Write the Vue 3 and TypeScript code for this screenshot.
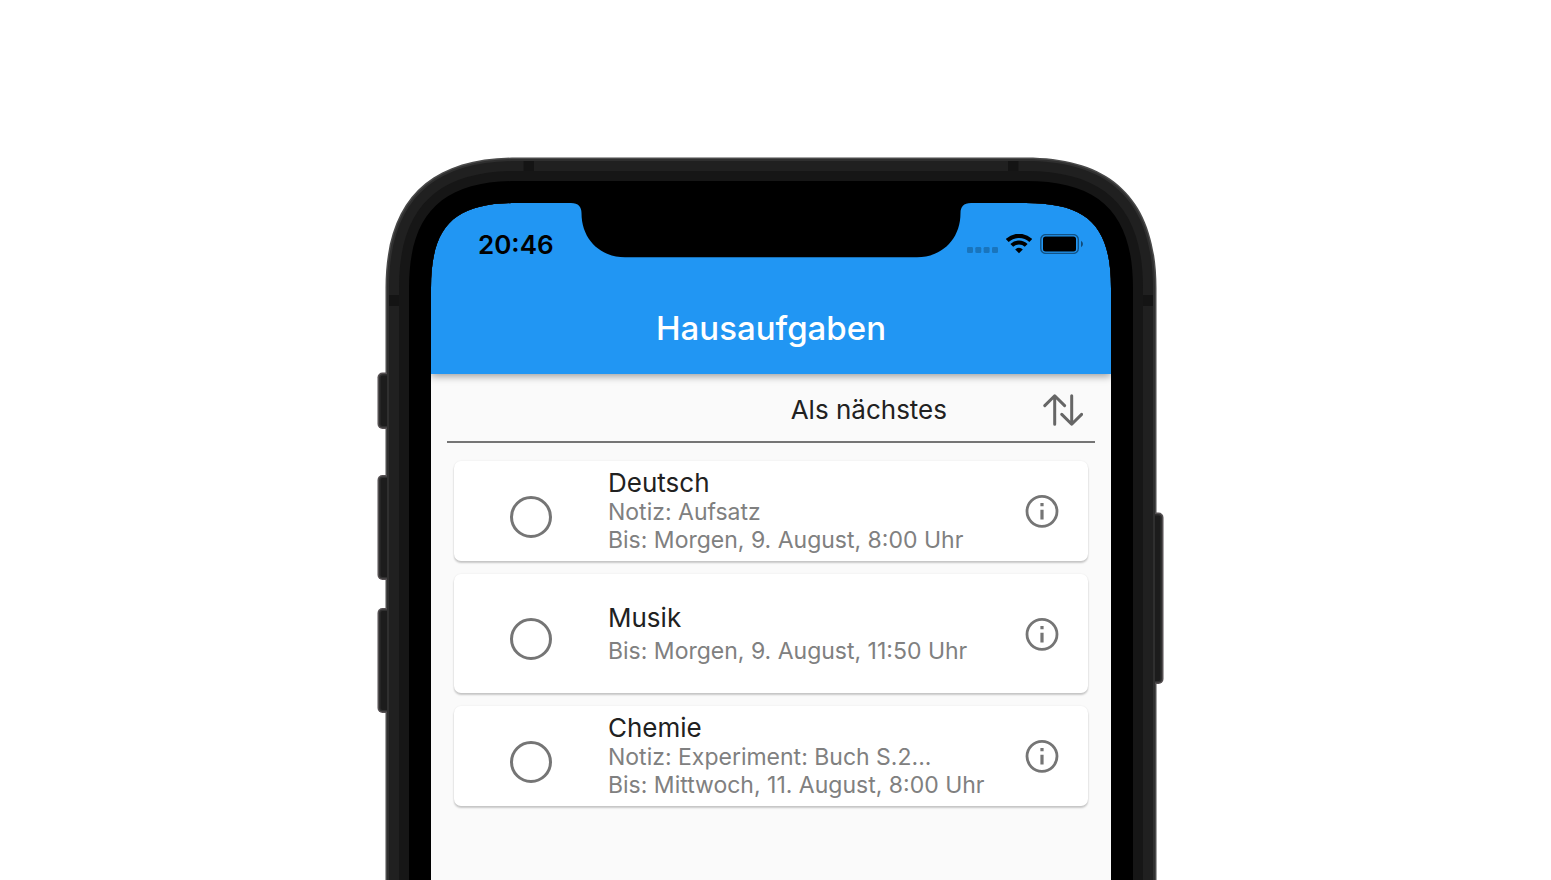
<script setup lang="ts">
import { ref } from 'vue'

interface Homework {
  id: number
  subject: string
  note?: string
  due: string
  done: boolean
}

const homework = ref<Homework[]>([
  { id: 1, subject: 'Deutsch', note: 'Aufsatz', due: 'Morgen, 9. August, 8:00 Uhr', done: false },
  { id: 2, subject: 'Musik', due: 'Morgen, 9. August, 11:50 Uhr', done: false },
  { id: 3, subject: 'Chemie', note: 'Experiment: Buch S.2...', due: 'Mittwoch, 11. August, 8:00 Uhr', done: false },
])

// Smooth-cornered outline, grown outwards from the display edge and open at the bottom.
function outline(grow: number): string {
  const left = 431 - grow
  const top = 203 - grow
  const right = 1111 + grow
  const bottom = 900
  const reach = 85 + grow
  const near = reach - (62 + grow * 0.552)
  return [
    `M${left} ${bottom}V${top + reach}`,
    `C${left} ${top + near} ${left + near} ${top} ${left + reach} ${top}`,
    `H${right - reach}`,
    `C${right - near} ${top} ${right} ${top + near} ${right} ${top + reach}`,
    `V${bottom}Z`,
  ].join('')
}

const display = outline(0)
const layers = [
  { fill: '#4a4a4a', d: outline(45.5) + display },
  { fill: '#2f2f2f', d: outline(44) + display },
  { fill: '#202020', d: outline(42) + display },
  { fill: '#161616', d: outline(32) + display },
  { fill: '#000', d: outline(22) + display },
]
const bands = [
  { x: 523.5, y: 161, w: 10.5, h: 10 },
  { x: 1008, y: 161, w: 10.5, h: 10 },
  { x: 389, y: 295, w: 10, h: 11 },
  { x: 1143, y: 295, w: 10, h: 11 },
]
const keys = [
  { x: 377.5, y: 372.5, h: 56.5 },
  { x: 377.5, y: 475, h: 105 },
  { x: 377.5, y: 608, h: 105 },
  { x: 1149, y: 512.5, h: 171.5 },
]
</script>

<template>
  <div class="page">
    <div class="device">
      <main class="screen">
        <header class="app-bar">
          <div class="status">
            <time class="clock">20:46</time>
            <div class="indicators">
              <svg width="31" height="20" viewBox="0 0 31 20" aria-hidden="true">
                <g fill="#000" fill-opacity=".22">
                  <rect x="0" y="13" width="6" height="6" rx="1.3" />
                  <rect x="8.3" y="13" width="6" height="6" rx="1.3" />
                  <rect x="16.6" y="13" width="6" height="6" rx="1.3" />
                  <rect x="25" y="13" width="6" height="6" rx="1.3" />
                </g>
              </svg>
              <svg width="26" height="20" viewBox="0 0 26 20" aria-hidden="true">
                <g fill="none" stroke="#000">
                  <path d="M1.2 6.6A17 17 0 0 1 24.8 6.6" stroke-width="4.2" />
                  <path d="M5.8 11.4A10.3 10.3 0 0 1 20.2 11.4" stroke-width="4" />
                </g>
                <path d="M13 19.2L9.2 15.4A5.4 5.4 0 0 1 16.8 15.4Z" fill="#000" />
              </svg>
              <svg width="43" height="20" viewBox="0 0 43 20" aria-hidden="true">
                <rect x=".8" y=".6" width="37.5" height="18.8" rx="5" fill="none" stroke="#000" stroke-opacity=".45" stroke-width="1.4" />
                <rect x="3" y="2.5" width="33" height="15" rx="2.5" fill="#000" />
                <path d="M41 6.8Q43 8 43 10T41 13.2Z" fill="#000" fill-opacity=".5" />
              </svg>
            </div>
          </div>
          <h1 class="title">Hausaufgaben</h1>
        </header>

        <div class="sort">
          <span id="sort-label">Als nächstes</span>
          <button class="icon-button" type="button" aria-labelledby="sort-label">
            <svg width="40" height="34" viewBox="0 0 40 34" aria-hidden="true">
              <path
                d="M11.7 31.2V3M1.8 12.6L11.7 2.8L21.6 12.6M28.7 2.8V31M18.8 21.4L28.7 31.2L38.6 21.4"
                fill="none" stroke="#666" stroke-width="3" stroke-linecap="round" stroke-linejoin="round"
              />
            </svg>
          </button>
        </div>

        <ul class="list">
          <li v-for="item in homework" :key="item.id" class="card" :class="{ roomy: !item.note }">
            <input :id="`done-${item.id}`" v-model="item.done" class="check" type="checkbox" />
            <div class="text">
              <label class="subject" :for="`done-${item.id}`">{{ item.subject }}</label>
              <p v-if="item.note">Notiz: {{ item.note }}</p>
              <p>Bis: {{ item.due }}</p>
            </div>
            <button class="icon-button" type="button" :aria-label="`Info ${item.subject}`">
              <svg width="34" height="34" viewBox="0 0 34 34" aria-hidden="true">
                <circle cx="17" cy="17.3" r="15" fill="none" stroke="#757575" stroke-width="2.8" />
                <path d="M15.4 9h3.2v3.2h-3.2zM15.4 15.7h3.2v9.8h-3.2z" fill="#757575" />
              </svg>
            </button>
          </li>
        </ul>
      </main>

      <svg class="frame" viewBox="377 157 788 723" preserveAspectRatio="xMidYMin slice" aria-hidden="true">
        <defs>
          <clipPath id="outside">
            <path d="M370 150H387V900H370ZM1155 150H1170V900H1155Z" />
          </clipPath>
        </defs>
        <path v-for="layer in layers" :key="layer.fill" :d="layer.d" :fill="layer.fill" fill-rule="evenodd" />
        <g clip-path="url(#outside)">
          <template v-for="key in keys" :key="key.y">
            <rect :x="key.x" :y="key.y" width="14.5" :height="key.h" rx="5" fill="#555052" />
            <rect :x="key.x + 1.5" :y="key.y + 1.5" width="11.5" :height="key.h - 3" rx="4" fill="#2f2f2f" />
            <rect :x="key.x + 3" :y="key.y + 3" width="8.5" :height="key.h - 6" rx="2" fill="#1c1c1c" />
          </template>
        </g>
        <rect v-for="band in bands" :key="`${band.x}`" :x="band.x" :y="band.y" :width="band.w" :height="band.h" fill="#141414" />
        <path d="M571 202V203C578.5 203 581.5 207 581.5 213C581.5 240 601 257.3 625 257.3H917C941 257.3 960.5 240 960.5 213C960.5 207 963.5 203 971 203V202Z" fill="#000" />
      </svg>
    </div>
  </div>
</template>

<style>
body {
  margin: 0;
  background: #fff;
}
</style>

<style scoped>
.page {
  box-sizing: border-box;
  display: flex;
  justify-content: center;
  min-height: 100vh;
  padding: 157px 9px 0 0;
  overflow: hidden;
  font-family: Inter, "Liberation Sans", sans-serif;
  color: #212121;
}

.device {
  position: relative;
  box-sizing: border-box;
  display: flex;
  width: 100%;
  max-width: 788px;
  padding: 46px 54px 0;
}

.frame {
  position: absolute;
  inset: 0;
  width: 100%;
  height: 100%;
  pointer-events: none;
}

.screen {
  flex: 1;
  min-width: 0;
  background: #fafafa;
}

.app-bar {
  background: #2196f3;
  box-shadow: 0 2px 8px rgba(0, 0, 0, 0.4);
}

.status {
  display: flex;
  align-items: center;
  justify-content: space-between;
  height: 82px;
  padding: 0 28px 0 47px;
}

.clock {
  font-size: 26px;
  font-weight: 600;
  color: #000;
}

.indicators {
  display: flex;
  gap: 8px;
}

svg {
  display: block;
}

.title {
  margin: 0;
  padding-bottom: 3px;
  font-size: 33px;
  font-weight: 500;
  line-height: 86px;
  text-align: center;
  color: #fff;
}

.sort {
  display: flex;
  align-items: center;
  justify-content: flex-end;
  gap: 96px;
  box-sizing: border-box;
  height: 69px;
  margin: 0 16px;
  padding: 4px 12px 0 0;
  border-bottom: 2px solid #757575;
  font-size: 26px;
}

.icon-button {
  padding: 0;
  border: 0;
  background: none;
  cursor: pointer;
}

.list {
  display: flex;
  flex-direction: column;
  gap: 13px;
  margin: 0;
  padding: 18px 23px;
  list-style: none;
}

.card {
  display: grid;
  grid-template-columns: 153px 1fr 92px;
  align-items: center;
  justify-items: center;
  min-height: 100px;
  border-radius: 7px;
  background: #fff;
  box-shadow: 0 2px 2px rgba(0, 0, 0, 0.2), 0 0 2px rgba(0, 0, 0, 0.08);
}

.card.roomy {
  min-height: 119px;
}

.check {
  appearance: none;
  box-sizing: border-box;
  width: 42px;
  height: 42px;
  margin: 11px 0 0;
  border: 3px solid #757575;
  border-radius: 50%;
}

.check:checked {
  background: #2196f3;
}

.text {
  justify-self: stretch;
  padding-left: 1px;
  font-size: 23px;
  line-height: 28px;
  color: #808080;
  white-space: nowrap;
}

.subject {
  display: block;
  font-size: 26px;
  line-height: 30px;
  color: #212121;
}

.roomy .subject {
  margin-bottom: 4px;
}

.text p {
  margin: 0;
}
</style>
